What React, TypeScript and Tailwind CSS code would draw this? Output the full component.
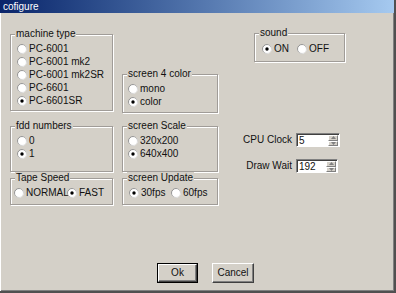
import React from "react";

const font = { fontFamily: '"Liberation Sans", Arial, sans-serif' };

function Radio({ checked }: { checked?: boolean }) {
  return (
    <svg width="10" height="10" viewBox="0 0 10 10" className="shrink-0">
      <defs>
        <linearGradient id="rg" x1="0" y1="0" x2="1" y2="1">
          <stop offset="0" stopColor="#7a7a7a" />
          <stop offset="0.55" stopColor="#b8b8b8" />
          <stop offset="1" stopColor="#ffffff" />
        </linearGradient>
      </defs>
      <circle cx="5" cy="5" r="4.5" fill="#fff" stroke="url(#rg)" strokeWidth="1" />
      {checked && <circle cx="5" cy="5" r="1.7" fill="#000" />}
    </svg>
  );
}

function RadioItem({ label, checked, className = "" }: { label: string; checked?: boolean; className?: string }) {
  return (
    <div className={`flex items-center h-[13px] whitespace-nowrap ${className}`}>
      <Radio checked={checked} />
      <span className="ml-[2px] leading-[13px]">{label}</span>
    </div>
  );
}

function Group({ label, className = "", children }: { label: string; className?: string; children?: React.ReactNode }) {
  return (
    <div className={`relative border border-[#a09c98] shadow-[inset_1px_1px_0_#ffffff,1px_1px_0_#ffffff] ${className}`}>
      <span className="absolute left-[4px] -top-[7px] px-[1px] bg-[#d4d0c8] leading-[12px] whitespace-nowrap">{label}</span>
      {children}
    </div>
  );
}

function Spin({ value, w }: { value: string; w: string }) {
  return (
    <div className={`flex h-[14px] ${w} bg-white border border-t-[#808080] border-l-[#808080] border-r-white border-b-white shadow-[inset_1px_1px_0_#404040]`}>
      <span className="pl-[2px] pt-[1px] leading-[12px] text-[10px]">{value}</span>
      <div className="ml-auto mr-[1px] mt-[1px] mb-[0px] w-[10px] flex flex-col">
        <div className="flex-1 bg-[#d4d0c8] border border-t-white border-l-white border-r-[#808080] border-b-[#808080] flex items-center justify-center">
          <svg width="5" height="3" viewBox="0 0 5 3"><path d="M0 3 L2.5 0 L5 3 Z" fill="#808080" /></svg>
        </div>
        <div className="flex-1 bg-[#d4d0c8] border border-t-white border-l-white border-r-[#808080] border-b-[#808080] flex items-center justify-center">
          <svg width="5" height="3" viewBox="0 0 5 3"><path d="M0 0 L2.5 3 L5 0 Z" fill="#808080" /></svg>
        </div>
      </div>
    </div>
  );
}

function Button({ label, def, w }: { label: string; def?: boolean; w: string }) {
  const inner = (
    <div className="h-full w-full flex items-center justify-center border border-t-white border-l-white border-r-[#404040] border-b-[#404040] shadow-[inset_-1px_-1px_0_#808080] bg-[#d4d0c8]">
      <span className="leading-[12px]">{label}</span>
    </div>
  );
  return def ? (
    <div className={`h-[20px] ${w} border border-black`}>{inner}</div>
  ) : (
    <div className={`h-[20px] ${w}`}>{inner}</div>
  );
}

export default function App() {
  return (
    <div
      style={font}
      className="w-[396px] h-[293px] bg-[#d4d0c8] text-[10px] text-[#111] flex flex-col overflow-hidden border-r-2 border-b-2 border-r-[#505050] border-b-[#505050]"
    >
      <div className="h-[13px] shrink-0 bg-gradient-to-r from-[#0a246a] to-[#a6caf0] flex items-center pl-[3px]">
        <span className="text-white text-[10px] leading-[12px]">cofigure</span>
      </div>
      <div className="flex-1 flex flex-col border-l border-white shadow-[inset_0_-1px_0_#808080,inset_-1px_0_0_#808080]">
        <div className="flex items-start pl-[9px]">
          {/* column 1 */}
          <div className="flex flex-col w-[103px] mt-[21px]">
            <Group label="machine type" className="h-[77px] pt-[7px] pl-[6px]">
              <RadioItem label="PC-6001" />
              <RadioItem label="PC-6001 mk2" />
              <RadioItem label="PC-6001 mk2SR" />
              <RadioItem label="PC-6601" />
              <RadioItem label="PC-6601SR" checked />
            </Group>
            <Group label="fdd numbers" className="h-[46px] mt-[15px] pt-[7px] pl-[6px]">
              <RadioItem label="0" />
              <RadioItem label="1" checked />
            </Group>
            <Group label="Tape Speed" className="h-[27px] mt-[6px] pt-[7px] pl-[3px] flex">
              <RadioItem label="NORMAL" className="w-[53px]" />
              <RadioItem label="FAST" checked />
            </Group>
          </div>
          {/* column 2 */}
          <div className="flex flex-col w-[96px] ml-[9px] mt-[61px]">
            <Group label="screen 4 color" className="h-[39px] pt-[7px] pl-[5px]">
              <RadioItem label="mono" />
              <RadioItem label="color" checked />
            </Group>
            <Group label="screen Scale" className="h-[46px] mt-[13px] pt-[7px] pl-[5px]">
              <RadioItem label="320x200" />
              <RadioItem label="640x400" checked />
            </Group>
            <Group label="screen Update" className="h-[27px] mt-[6px] pt-[7px] pl-[6px] flex">
              <RadioItem label="30fps" checked className="w-[42px]" />
              <RadioItem label="60fps" />
            </Group>
          </div>
          {/* column 3 */}
          <div className="flex flex-col ml-[12px] mt-[20px] w-[160px]">
            <Group label="sound" className="ml-[24px] w-[91px] h-[29px] pt-[8px] pl-[7px] flex">
              <RadioItem label="ON" checked className="w-[35px]" />
              <RadioItem label="OFF" />
            </Group>
            <div className="flex items-center mt-[71px]">
              <span className="w-[62px] text-right whitespace-nowrap leading-[12px]">CPU Clock</span>
              <div className="ml-[4px]">
                <Spin value="5" w="w-[44px]" />
              </div>
            </div>
            <div className="flex items-center mt-[12px]">
              <span className="w-[62px] text-right whitespace-nowrap leading-[12px]">Draw Wait</span>
              <div className="ml-[4px]">
                <Spin value="192" w="w-[42px]" />
              </div>
            </div>
          </div>
        </div>
        <div className="mt-auto mb-[8px] flex pl-[156px]">
          <Button label="Ok" def w="w-[41px]" />
          <div className="ml-[14px]">
            <Button label="Cancel" w="w-[42px]" />
          </div>
        </div>
      </div>
    </div>
  );
}
